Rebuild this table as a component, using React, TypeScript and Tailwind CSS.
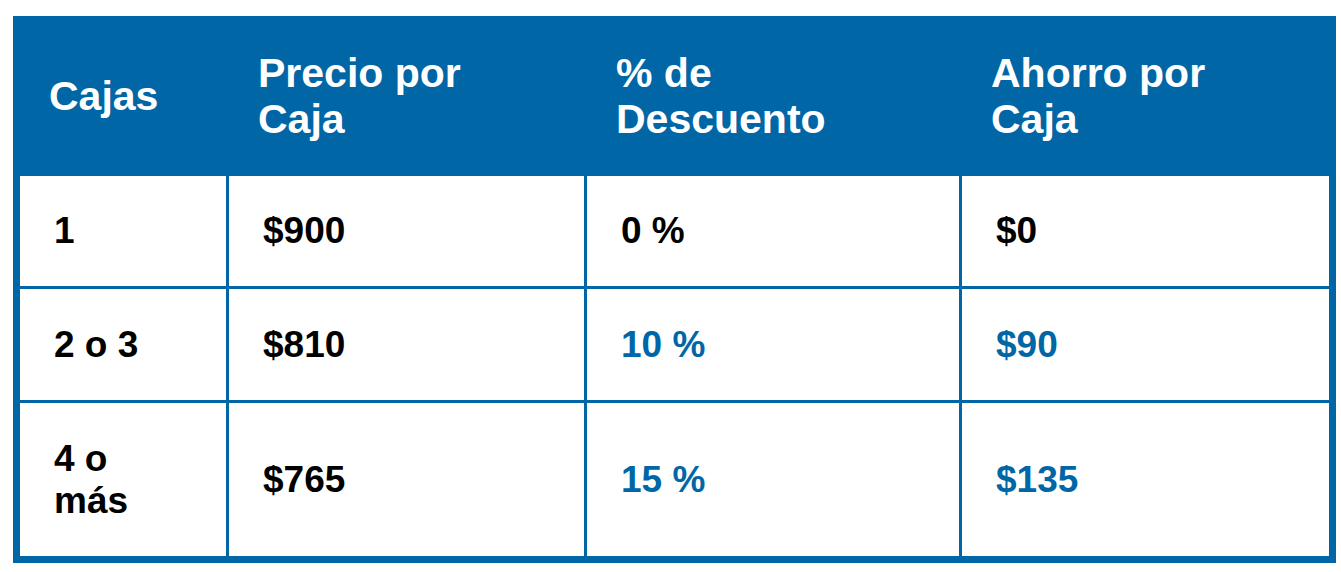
const headers = [["Cajas"], ["Precio por", "Caja"], ["% de", "Descuento"], ["Ahorro por", "Caja"]];

const rows = [
  { h: "h-[110px]", cells: [["1"], ["$900"], ["0 %"], ["$0"]], blue: false },
  { h: "h-[111px]", cells: [["2 o 3"], ["$810"], ["10 %"], ["$90"]], blue: true },
  { h: "h-[153px]", cells: [["4 o", "más"], ["$765"], ["15 %"], ["$135"]], blue: true },
];

const cols = "grid grid-cols-[206px_355px_372px_367px] gap-x-[3px]";

export default function App() {
  return (
    <div className="min-h-[572px] w-[1341px] bg-white pt-[16px] pl-[13px] font-['Liberation_Sans',Arial,sans-serif] font-bold">
      <div className="w-[1323px] bg-[#0066a6]">
        <div className={`${cols} h-[160px] px-[7px]`}>
          {headers.map((lines, i) => (
            <div key={i} className="flex items-center pl-[29px] text-[41px] leading-[46px] text-white">
              <div>
                {lines.map((l, j) => (
                  <div key={j}>{l}</div>
                ))}
              </div>
            </div>
          ))}
        </div>
        <div className="flex flex-col gap-y-[3px] px-[7px] pb-[7px]">
          {rows.map((r, i) => (
            <div key={i} className={`${cols} ${r.h}`}>
              {r.cells.map((lines, j) => (
                <div
                  key={j}
                  className={`flex items-center bg-white pl-[34px] text-[37px] leading-[42px] ${
                    r.blue && j >= 2 ? "text-[#0066a6]" : "text-black"
                  }`}
                >
                  <div>
                    {lines.map((l, k) => (
                      <div key={k}>{l}</div>
                    ))}
                  </div>
                </div>
              ))}
            </div>
          ))}
        </div>
      </div>
    </div>
  );
}
